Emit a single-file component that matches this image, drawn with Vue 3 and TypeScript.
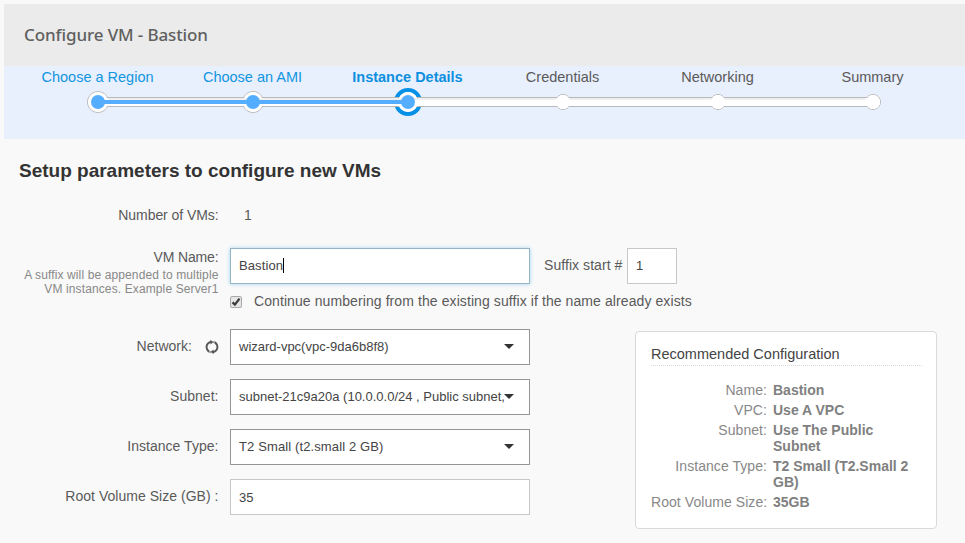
<script setup lang="ts">
import { ref } from 'vue'

type StepState = 'done' | 'active' | 'todo'
interface Step { label: string; state: StepState; x: number }
interface SelectField { label: string; value: string; refresh?: boolean; kind: string }
interface Recommendation { label: string; value: string }

const steps: Step[] = [
  { label: 'Choose a Region', state: 'done', x: 78 },
  { label: 'Choose an AMI', state: 'done', x: 233 },
  { label: 'Instance Details', state: 'active', x: 388 },
  { label: 'Credentials', state: 'todo', x: 543 },
  { label: 'Networking', state: 'todo', x: 698 },
  { label: 'Summary', state: 'todo', x: 853 },
]
const radius: Record<StepState, number> = { done: 10.5, active: 12, todo: 7.5 }

const selects: SelectField[] = [
  { label: 'Network:', value: 'wizard-vpc(vpc-9da6b8f8)', refresh: true, kind: 'network' },
  { label: 'Subnet:', value: 'subnet-21c9a20a (10.0.0.0/24 , Public subnet,', kind: 'subnet' },
  { label: 'Instance Type:', value: 'T2 Small (t2.small 2 GB)', kind: 'type' },
]
const recommended: Recommendation[] = [
  { label: 'Name:', value: 'Bastion' },
  { label: 'VPC:', value: 'Use A VPC' },
  { label: 'Subnet:', value: 'Use The Public Subnet' },
  { label: 'Instance Type:', value: 'T2 Small (T2.Small 2 GB)' },
  { label: 'Root Volume Size:', value: '35GB' },
]
const name = ref('Bastion')
const keepNumbering = ref(true)
</script>

<template>
  <main class="wizard">
    <header class="title">Configure VM - Bastion</header>

    <nav class="stepper">
      <ol class="labels">
        <li v-for="s in steps" :key="s.label" :class="s.state">{{ s.label }}</li>
      </ol>
      <svg class="track" width="930" height="30" viewBox="0 0 930 30">
        <circle v-for="s in steps" :key="s.x" :cx="s.x" cy="15" :r="radius[s.state]" :class="['node', s.state]" />
        <rect class="rail" x="78" y="10.5" width="775" height="9" />
        <circle v-for="s in steps" :key="s.x" :cx="s.x" cy="15" :r="s.state === 'todo' ? 7 : 10" fill="#fff" />
        <rect x="78" y="11" width="775" height="8" fill="#fff" />
        <rect x="88" y="11" width="757" height="2" fill="#f0f0f0" />
        <rect x="78" y="13" width="310" height="4" fill="#55adff" />
        <template v-for="s in steps" :key="s.x">
          <circle v-if="s.state !== 'todo'" :cx="s.x" cy="15" r="7" fill="#55adff" />
          <circle v-else :cx="s.x" cy="15" r="7" fill="#fff" />
        </template>
      </svg>
    </nav>

    <h1>Setup parameters to configure new VMs</h1>

    <div class="content">
      <form class="form" @submit.prevent>
        <div class="row count">
          <span class="label">Number of VMs:</span>
          <span class="count-value">1</span>
        </div>
        <div class="row name-row">
          <div class="label name-label">
            <span class="name-title">VM Name:</span>
            <small>A suffix will be appended to multiple<br />VM instances. Example Server1</small>
          </div>
          <div class="name-fields">
            <div class="name-line">
              <div class="box focus"><span>{{ name }}</span><i class="cursor" /></div>
              <span class="suffix-label">Suffix start #</span>
              <div class="box suffix">1</div>
            </div>
            <div class="check-line" @click="keepNumbering = !keepNumbering">
              <span class="checkbox">
                <svg v-if="keepNumbering" width="10" height="10" viewBox="0 0 10 10"><path d="M1.5 5.3 3.9 7.6 8.5 1.6" fill="none" stroke="#3c3c3c" stroke-width="2.3" /></svg>
              </span>
              <span class="check-text">Continue numbering from the existing suffix if the name already exists</span>
            </div>
          </div>
        </div>
        <div v-for="f in selects" :key="f.label" class="row field">
          <div class="label">
            <span>{{ f.label }}</span>
            <svg v-if="f.refresh" class="refresh" width="14" height="14" viewBox="0 0 14 14">
              <path d="M6 12.3A5.4 5.4 0 0 1 2.8 3.6Q4.2 1.9 6.6 1.7M8 1.7A5.4 5.4 0 0 1 11.2 10.4Q9.8 12.1 7.4 12.3" fill="none" stroke="#555" stroke-width="1.9" />
              <path d="M5.2 0 8.4 1.9 5.6 4.6ZM8.8 14 5.6 12.1 8.4 9.4Z" fill="#555" />
              <path d="M9 .2V3.4M5 10.6V13.8" stroke="#f9f9f9" stroke-width=".9" />
            </svg>
          </div>
          <div class="box select">
            <span :class="['value', f.kind]">{{ f.value }}</span>
            <i class="caret" />
          </div>
        </div>
        <div class="row field">
          <div class="label">Root Volume Size (GB) :</div>
          <div class="box root">35</div>
        </div>
      </form>

      <aside class="card">
        <h2>Recommended Configuration</h2>
        <dl>
          <template v-for="r in recommended" :key="r.label">
            <dt>{{ r.label }}</dt>
            <dd>{{ r.value }}</dd>
          </template>
        </dl>
      </aside>
    </div>
  </main>
</template>

<style>
body { background: #f9f9f9; overflow: hidden; }
</style>

<style scoped>
* { box-sizing: border-box; }
.wizard { height: 543px; padding: 4px 0 0 4px; font-family: "Liberation Sans", Arial, sans-serif; font-size: 14px; color: #5a5a5a; background: #f9f9f9; }
.title { height: 62px; padding-left: 20px; background: #ebebeb; color: #606060; font: 500 17px/62px "Noto Sans", sans-serif; letter-spacing: -.11px; }
.stepper { height: 73px; padding-left: 16px; background: #e8effd; }
.labels { display: grid; grid-template-columns: repeat(6, 155px); margin: 0; padding: 0; list-style: none; height: 21px; text-align: center; font-size: 14.5px; line-height: 22px; }
.labels .done { color: #1296e0; }
.labels .active { color: #0d8fdf; font-weight: bold; }
.track { display: block; }
.node { fill: #fff; stroke: #b8b8b8; stroke-width: 1; }
.node.active { stroke: #0791e6; stroke-width: 4; }
.rail { fill: #fff; stroke: #b8b8b8; }
h1 { margin: 0; padding: 20px 0 0 15px; height: 43px; font-size: 19px; line-height: 24px; color: #333; }
.content { display: flex; height: 340px; }
.form { width: 631px; }
.row { display: flex; }
.label { flex: none; display: flex; justify-content: flex-end; align-items: center; width: 214.5px; margin-right: 11.5px; }
.count { height: 66px; align-items: flex-start; padding-top: 25px; line-height: 16px; }
.count .label { letter-spacing: -.07px; }
.count-value { padding-left: 14px; }
.name-row { height: 81px; }
.name-label { display: block; text-align: right; }
.name-title { display: block; line-height: 19px; letter-spacing: -.15px; }
small { display: block; margin-top: 1px; font-size: 12px; line-height: 14px; color: #888; white-space: nowrap; letter-spacing: .12px; }
.name-fields { flex: none; }
.name-line { display: flex; align-items: center; }
.suffix-label { width: 83px; margin-left: 14px; padding-bottom: 2px; white-space: nowrap; letter-spacing: .06px; }
.box { flex: none; display: flex; align-items: center; width: 300px; height: 36px; padding: 0 0 2px 8px; border: 1px solid #c8c8c8; background: #fff; font-size: 13px; color: #444; }
.box.focus { border-color: #94b4ca; box-shadow: 0 0 4px #a5d2ee; letter-spacing: .1px; }
.box.root { padding-bottom: 0; }
.cursor { width: 1px; height: 15px; background: #000; }
.box.suffix { width: 50px; }
.check-line { display: flex; align-items: center; height: 35px; }
.checkbox { display: flex; align-items: center; justify-content: center; width: 12px; height: 12px; margin-right: 12px; border: 1px solid #aaa; border-radius: 2px; background: #e6e6e6; }
.check-text { padding-bottom: 2px; white-space: nowrap; letter-spacing: .088px; }
.field { height: 36px; margin-bottom: 14px; }
.field .label { padding-bottom: 2px; letter-spacing: .03px; }
.refresh { margin: 1px -.5px 0 13px; }
.select { justify-content: space-between; padding: 0 15px 0 8px; border-color: #959595; }
.value { width: 265px; padding-bottom: 2px; white-space: nowrap; }
.value.type { letter-spacing: .12px; }
.caret { flex: none; border: 5px solid transparent; border-top-color: #333; border-bottom: 0; margin-bottom: 1px; }
.card { flex: none; width: 302px; height: 198px; margin-top: 149px; padding: 12px 14px 0 15px; border: 1px solid #d9d9d9; border-radius: 4px; background: #fff; }
h2 { margin: 0 0 16px; height: 22px; border-bottom: 1px dotted #d8d8d8; font-size: 14.5px; line-height: 20px; font-weight: normal; color: #444; }
dl { display: grid; grid-template-columns: 116px 145px; column-gap: 6px; row-gap: 4px; margin: 0; line-height: 16px; color: #888; }
dt { text-align: right; white-space: nowrap; letter-spacing: .06px; }
dd { margin: 0; font-weight: bold; color: #808080; }
</style>
